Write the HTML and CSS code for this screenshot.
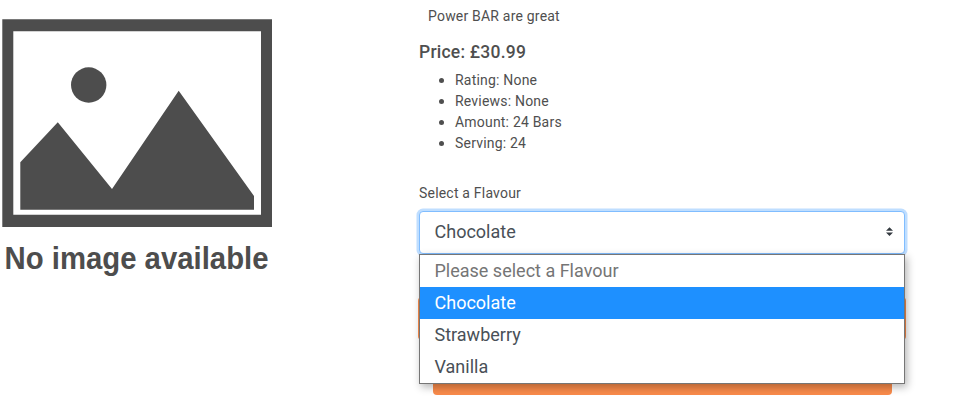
FILE: index.html
```html
<!DOCTYPE html>
<html lang="en">
<head>
<meta charset="utf-8">
<title>Power BAR</title>
<link rel="stylesheet" href="styles.css">
</head>
<body>
<main class="product">
  <div class="media">
    <svg class="placeholder" width="290" height="290" viewBox="0 0 290 290" fill="#4d4d4d">
      <path fill-rule="evenodd" d="M2.3 19.3H272V227H2.3ZM13.3 31.3V214.7H261V31.3Z"/>
      <circle cx="88.7" cy="85" r="17.7"/>
      <path d="M20.3 162.3 57.8 122.3 112 189 178.7 90.7 254 196V209.7H20.3Z"/>
      <text class="caption" x="4.5" y="268.5" textLength="264" lengthAdjust="spacingAndGlyphs">No image available</text>
    </svg>
  </div>
  <section class="details">
    <p class="description">Power BAR are great</p>
    <h5 class="price">Price: £30.99</h5>
    <ul class="facts">
      <li>Rating: None</li>
      <li>Reviews: None</li>
      <li>Amount: 24 Bars</li>
      <li>Serving: 24</li>
    </ul>
    <div class="label">Select a Flavour</div>
    <div class="picker">
      <div class="select">
        <span>Chocolate</span>
        <svg width="8" height="10" viewBox="0 0 4 5"><path fill="#343a40" d="M2 0 0 2h4zm0 5L0 3h4z"/></svg>
      </div>
      <div class="options">
        <div class="option muted">Please select a Flavour</div>
        <div class="option active">Chocolate</div>
        <div class="option">Strawberry</div>
        <div class="option">Vanilla</div>
      </div>
    </div>
    <div class="button wide"></div>
    <div class="button"></div>
  </section>
</main>
</body>
</html>
```
FILE: styles.css
```css
* { box-sizing: border-box; }
body {
  margin: 0;
  height: 406px;
  overflow: hidden;
  background: #fff;
  color: #495057;
  font: 14px/21px Roboto, sans-serif;
}
.product { display: flex; }
.media { width: 419px; flex: none; }
.placeholder { display: block; }
.caption { font: bold 30.5px "Liberation Sans", Arial, sans-serif; }
.details { width: 486px; padding-top: 6px; color: #4f4f4f; }
.description { margin: 0 0 15px; padding-left: 9px; letter-spacing: .2px; }
.price { margin: 0 0 7px; font-size: 17.5px; line-height: 21px; font-weight: 500; letter-spacing: .22px; }
.facts { margin: 0 0 29px; padding-left: 20px; letter-spacing: .2px; list-style: none; }
.facts li { display: flex; align-items: center; gap: 11px; }
.facts li::before { content: ""; width: 5px; height: 5px; border-radius: 50%; background: #4f4f4f; }
.label { margin-bottom: 7px; letter-spacing: .2px; }
.picker { position: relative; z-index: 1; }
.select {
  height: 43px;
  display: flex;
  align-items: center;
  justify-content: space-between;
  padding: 0 11px 2px 14.5px;
  border: 1px solid #80bdff;
  border-radius: 4px;
  background: #fff;
  box-shadow: 0 0 0 2.5px rgba(0, 123, 255, .25);
  color: #495057;
  font-size: 18px;
}
.select svg { width: 7px; height: 9px; }
.options {
  position: absolute;
  top: 43px;
  left: 0;
  width: 486px;
  border: 1px solid #767676;
  background: #fff;
  box-shadow: 2px 3px 8px rgba(0, 0, 0, .3);
  color: #495057;
}
.option { padding-left: 14.5px; font-size: 18px; line-height: 32px; }
.muted { color: #757575; }
.active { background: #1e90ff; color: #fff; }
.button {
  height: 43px;
  margin: 12px 13px 0 14px;
  border-radius: 4px;
  background: #f98b4b;
}
.wide { margin: 43px -1px 0; }
```
